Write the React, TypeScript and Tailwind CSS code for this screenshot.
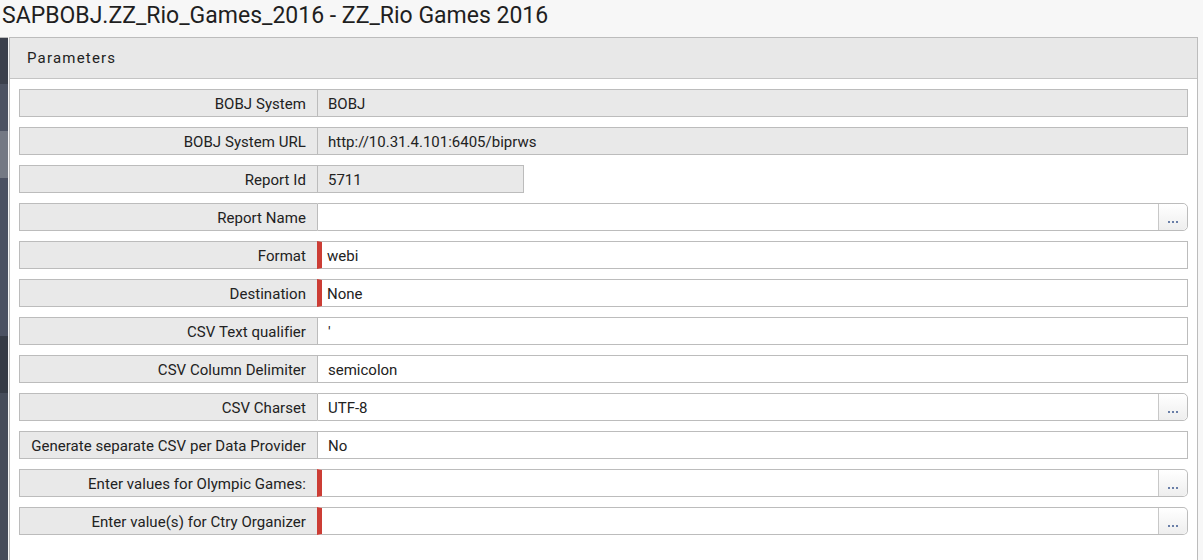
import React from "react";

type Row = {
  label: string;
  value: string;
  readOnly?: boolean;
  required?: boolean;
  browse?: boolean;
  short?: boolean;
};

const rows: Row[] = [
  { label: "BOBJ System", value: "BOBJ", readOnly: true },
  { label: "BOBJ System URL", value: "http://10.31.4.101:6405/biprws", readOnly: true },
  { label: "Report Id", value: "5711", readOnly: true, short: true },
  { label: "Report Name", value: "", browse: true },
  { label: "Format", value: "webi", required: true },
  { label: "Destination", value: "None", required: true },
  { label: "CSV Text qualifier", value: "'" },
  { label: "CSV Column Delimiter", value: "semicolon" },
  { label: "CSV Charset", value: "UTF-8", browse: true },
  { label: "Generate separate CSV per Data Provider", value: "No" },
  { label: "Enter values for Olympic Games:", value: "", required: true, browse: true },
  { label: "Enter value(s) for Ctry Organizer", value: "", required: true, browse: true },
];

const ParamRow = ({ row }: { row: Row }) => {
  return (
    <div className="flex h-[28px] text-[15px] text-[#222]">
      <div className="w-[298px] shrink-0 flex items-center justify-end pr-[11px] pt-[2px] tracking-[0.05px] bg-[#e9e9e9] border border-[#bcbcbc] border-r-0">
        {row.label}
      </div>
      <div
        className={`flex ${row.short ? "w-[207px]" : "flex-1"} border ${
          row.required ? "border-l-[5px] border-l-[#cc3d35]" : "border-l border-l-[#bcbcbc]"
        } border-[#bcbcbc] ${row.readOnly ? "bg-[#e9e9e9]" : "bg-white"} ${
          row.browse ? "rounded-r-[5px]" : ""
        }`}
      >
        <div className={`flex-1 flex items-center pt-[2px] ${row.required ? "pl-[5px]" : "pl-[10px]"}`}>
          {row.value}
        </div>
        {row.browse && (
          <div className="w-[29px] shrink-0 border-l border-[#c8c8c8] bg-gradient-to-b from-white to-[#eeeeee] rounded-r-[5px] flex items-end justify-center gap-[2px] pb-[7px]">
            <span className="w-[2px] h-[2px] bg-[#6a7fa8]" />
            <span className="w-[2px] h-[2px] bg-[#6a7fa8]" />
            <span className="w-[2px] h-[2px] bg-[#6a7fa8]" />
          </div>
        )}
      </div>
    </div>
  );
};

export default function App() {
  return (
    <div className="w-[1203px] h-[560px] overflow-hidden bg-[#f7f7f7] font-['Roboto',sans-serif]">
      <div className="h-[37px] pl-[2px] pt-[1px] text-[23px] text-[#1f1f1f] leading-[30px]">
        SAPBOBJ.ZZ_Rio_Games_2016 - ZZ_Rio Games 2016
      </div>
      <div className="flex h-[523px]">
        <div className="w-[8px] shrink-0 flex flex-col border-t border-[#bcbcbc]">
          <div className="h-[46px] bg-[#3b404c]" />
          <div className="h-[47px] bg-[#4c5262]" />
          <div className="h-[47px] bg-[#747984]" />
          <div className="h-[158px] bg-[#4b5162]" />
          <div className="h-[57px] bg-[#353a45]" />
          <div className="flex-1 bg-[#464c5a]" />
        </div>
        <div className="w-[1189px] ml-[1px] shrink-0 flex flex-col border border-[#bcbcbc] border-b-0 bg-white">
          <div className="h-[41px] bg-[#e8e8e8] border-b border-[#c4c4c4] flex items-center pl-[17px] text-[15px] tracking-[1.2px] text-[#222]">
            Parameters
          </div>
          <div className="flex flex-col gap-[10px] pt-[10px] pl-[9px] pr-[9px]">
            {rows.map((row) => (
              <ParamRow key={row.label} row={row} />
            ))}
          </div>
        </div>
      </div>
    </div>
  );
}
